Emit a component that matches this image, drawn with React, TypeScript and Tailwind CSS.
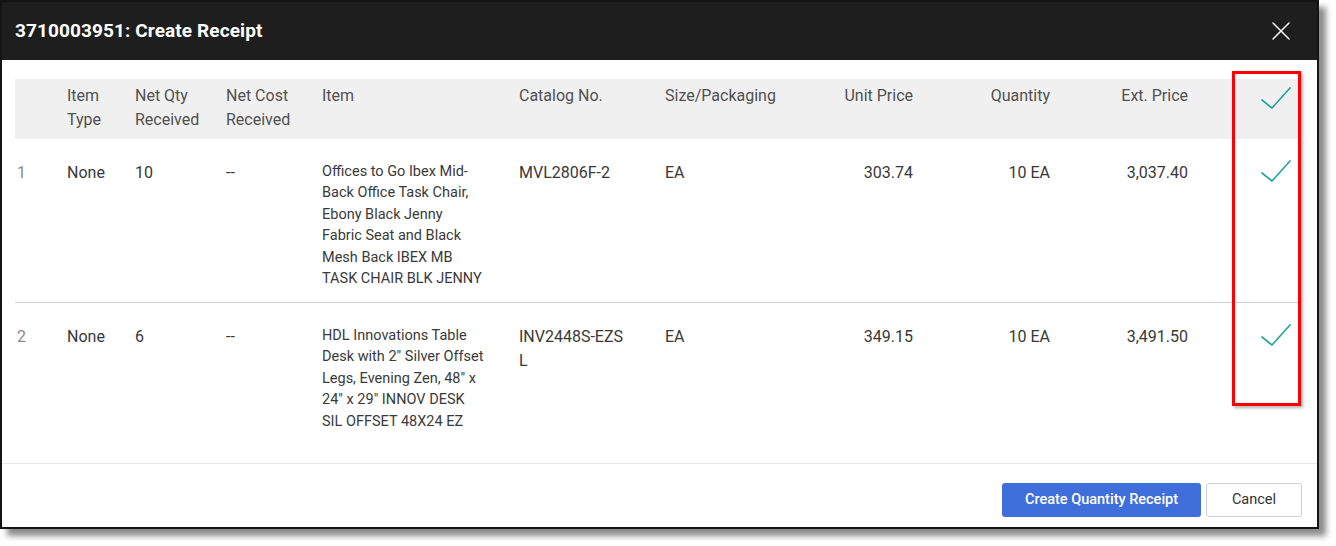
import { X } from "lucide-react";

const cols = "grid grid-cols-[52px_68px_91px_96px_197px_146px_120px_128px_137px_138px_112px]";

const rows = [
  {
    n: 1,
    type: "None",
    qty: "10",
    cost: "--",
    item: ["Offices to Go Ibex Mid-", "Back Office Task Chair,", "Ebony Black Jenny", "Fabric Seat and Black", "Mesh Back IBEX MB", "TASK CHAIR BLK JENNY"],
    catalog: ["MVL2806F-2"],
    size: "EA",
    unit: "303.74",
    quantity: "10 EA",
    ext: "3,037.40",
  },
  {
    n: 2,
    type: "None",
    qty: "6",
    cost: "--",
    item: ["HDL Innovations Table", "Desk with 2\" Silver Offset", "Legs, Evening Zen, 48\" x", "24\" x 29\" INNOV DESK", "SIL OFFSET 48X24 EZ"],
    catalog: ["INV2448S-EZS", "L"],
    size: "EA",
    unit: "349.15",
    quantity: "10 EA",
    ext: "3,491.50",
  },
];

function Check() {
  return (
    <svg width="30" height="22" viewBox="0 0 30 22" fill="none">
      <path d="M1 13 L11 21 L29 1" stroke="#25a69b" strokeWidth="1.7" strokeLinecap="round" strokeLinejoin="round" />
    </svg>
  );
}

export default function App() {
  return (
    <div className="relative w-[1336px] h-[546px] bg-white" style={{ fontFamily: "Roboto, 'Liberation Sans', sans-serif" }}>
      <div className="w-[1319px] h-[529px] flex flex-col bg-white border-2 border-[#141414] shadow-[7px_7px_6px_rgba(0,0,0,0.45)]">
        <div className="h-[58px] shrink-0 bg-[#1e1e1e] flex items-center justify-between pl-[13px] pr-[20px]">
          <h1 className="text-white text-[19px] font-bold tracking-[0.1px]">3710003951: Create Receipt</h1>
          <X className="w-[32px] h-[32px] text-white" strokeWidth={1.1} />
        </div>

        <div className="flex-1 pl-[13px] pt-[19px]">
          <div className="w-[1285px]">
            <div className={`${cols} h-[60px] bg-[#f0f0f0] text-[16px] leading-[24px] text-[#505050] pt-[5px]`}>
              <div />
              <div>Item<br />Type</div>
              <div>Net Qty<br />Received</div>
              <div>Net Cost<br />Received</div>
              <div>Item</div>
              <div>Catalog No.</div>
              <div>Size/Packaging</div>
              <div className="text-right">Unit Price</div>
              <div className="text-right">Quantity</div>
              <div className="text-right">Ext. Price</div>
              <div className="flex justify-end pr-[9px] pt-[3px]"><Check /></div>
            </div>

            {rows.map((r, i) => (
              <div key={r.n} className={`${cols} text-[16px] leading-[24px] text-[#383838] pt-[22px] ${i === 0 ? "h-[164px] border-b border-[#cfcfcf]" : "h-[160px]"}`}>
                <div className="pl-[2px] text-[#8a8a8a]">{r.n}</div>
                <div>{r.type}</div>
                <div>{r.qty}</div>
                <div>{r.cost}</div>
                <div className="text-[14.5px] leading-[21.4px] text-[#3a3a3a]">
                  {r.item.map((l) => <div key={l} className="whitespace-nowrap">{l}</div>)}
                </div>
                <div>
                  {r.catalog.map((l) => <div key={l}>{l}</div>)}
                </div>
                <div>{r.size}</div>
                <div className="text-right">{r.unit}</div>
                <div className="text-right">{r.quantity}</div>
                <div className="text-right">{r.ext}</div>
                <div className="flex justify-end pr-[9px] -mt-[1px]"><Check /></div>
              </div>
            ))}
          </div>
        </div>

        <div className="h-[64px] shrink-0 border-t border-[#e6e6e6] flex justify-end items-start gap-[5px] pt-[19px] pr-[15px]">
          <button className="w-[199px] h-[34px] rounded-[3px] bg-[#3e6fdb] text-white text-[14.5px] font-medium">Create Quantity Receipt</button>
          <button className="w-[96px] h-[34px] rounded-[3px] bg-white border border-[#c9d1db] text-[#333] text-[14.5px]">Cancel</button>
        </div>
      </div>

      <div className="absolute left-[1232px] top-[71px] w-[69px] h-[335px] border-[3px] border-[#ff0000] shadow-[2px_2px_3px_rgba(0,0,0,0.3)]" />
    </div>
  );
}
